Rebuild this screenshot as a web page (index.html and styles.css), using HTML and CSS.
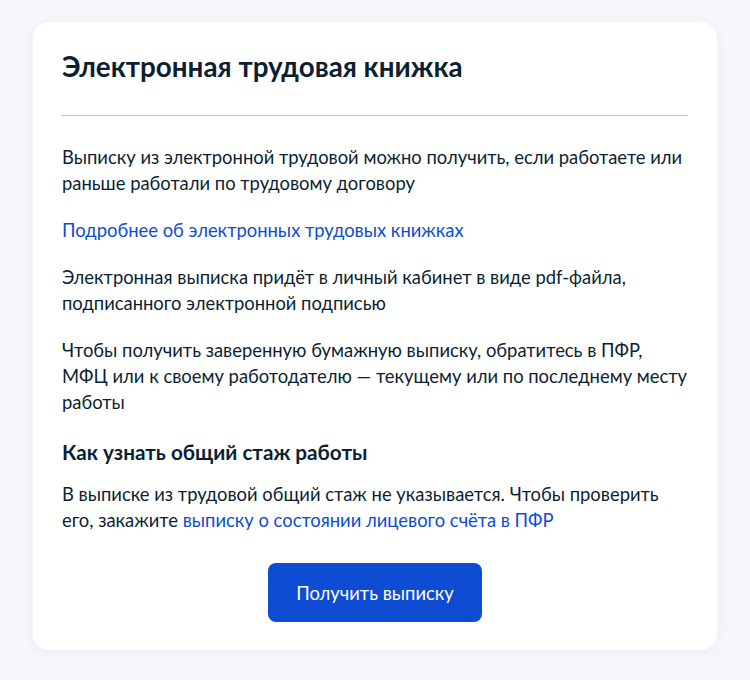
FILE: index.html
```html
<!DOCTYPE html>
<html lang="ru">
<head>
  <meta charset="UTF-8" />
  <meta name="viewport" content="width=device-width, initial-scale=1.0"/>
  <title>Электронная трудовая книжка</title>
  <link rel="stylesheet" href="styles.css">
</head>
<body>
  <div class="card">
    <h1 class="card-title">Электронная трудовая книжка</h1>
    <div class="divider"></div>

    <p class="text">Выписку из электронной трудовой можно получить, если работаете или раньше работали по трудовому договору</p>
    <p class="text"><a class="link" href="#">Подробнее об электронных трудовых книжках</a></p>
    <p class="text">Электронная выписка придёт в личный кабинет в виде pdf-файла, подписанного электронной подписью</p>
    <p class="text">Чтобы получить заверенную бумажную выписку, обратитесь в ПФР, МФЦ или к своему работодателю — текущему или по последнему месту работы</p>

    <h2 class="subtitle">Как узнать общий стаж работы</h2>
    <p class="text">В выписке из трудовой общий стаж не указывается. Чтобы проверить его, закажите <a class="link" href="#">выписку о состоянии лицевого счёта в ПФР</a></p>

    <div class="actions">
      <button class="button">Получить выписку</button>
    </div>
  </div>
</body>
</html>
```

FILE: styles.css
```css
* {
  box-sizing: border-box;
}

body {
  margin: 0;
  padding: 22px 33px;
  background: #f5f7fa;
  font-family: 'Lato', 'Noto Sans', sans-serif;
  color: #0b1f33;
}

.card {
  background: #fff;
  border-radius: 16px;
  padding: 27px 29px 28px;
  box-shadow: 0 2px 12px rgba(200, 210, 225, 0.25);
}

.card-title {
  margin: 0;
  font-size: 27.8px;
  line-height: 36px;
  font-weight: 700;
}

.divider {
  height: 1px;
  background: #b6cad7;
  margin: 30px 0 28px;
}

.text {
  margin: 0 0 21px;
  font-size: 18.4px;
  line-height: 26px;
}

.link {
  color: #0d4cd3;
  text-decoration: none;
}

.subtitle {
  margin: 23px 0 15px;
  font-size: 20.7px;
  line-height: 28px;
  font-weight: 700;
}

.actions {
  display: flex;
  justify-content: center;
  padding-top: 9px;
}

.button {
  width: 214px;
  height: 59px;
  border: none;
  border-radius: 8px;
  background: #0d4cd3;
  color: #fff;
  font-family: inherit;
  font-size: 18.4px;
  cursor: pointer;
}
```
